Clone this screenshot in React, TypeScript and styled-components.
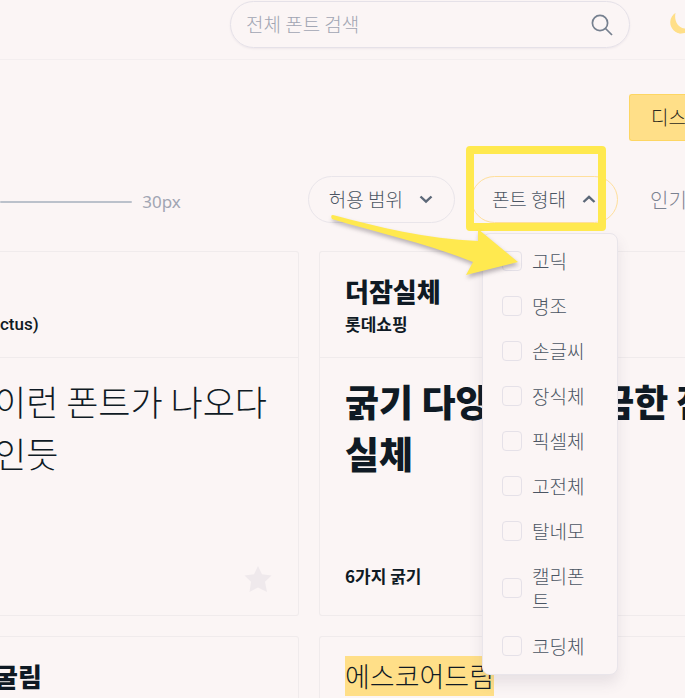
import React from "react";
import styled, { createGlobalStyle, css } from "styled-components";

const GlobalStyle = createGlobalStyle`
  *, *::before, *::after { box-sizing: border-box; }
  body {
    margin: 0;
    background: #fbf5f5;
    color: #0f1a24;
    font-family: "Noto Sans CJK KR", sans-serif;
    font-size: 19px;
    font-weight: 300;
    line-height: 25px;
  }
  button, input { font: inherit; color: inherit; margin: 0; }
  h2, p { margin: 0; font-weight: inherit; }
`;

const Page = styled.div`
  height: 100vh;
  overflow: hidden;
`;

const Header = styled.header`
  display: flex;
  align-items: flex-start;
  justify-content: flex-end;
  gap: 39px;
  height: 60px;
  padding-top: 1px;
  border-bottom: 1px solid #f3eeef;
`;

const SearchForm = styled.form`
  display: flex;
  align-items: center;
  flex: 0 1 400px;
  height: 47px;
  padding: 0 16px 0 15px;
  border: 1px solid #e5e1e8;
  border-radius: 24px;
  box-shadow: 0 1px 2px rgba(90, 80, 110, 0.08);
`;

const SearchInput = styled.input`
  flex: 1;
  min-width: 0;
  padding: 0 0 2px;
  border: 0;
  outline: 0;
  background: transparent;
  &::placeholder { color: #a1a5b3; opacity: 1; }
`;

const IconButton = styled.button`
  display: flex;
  flex: none;
  padding: 0;
  border: 0;
  background: transparent;
  cursor: pointer;
`;

const ThemeButton = styled(IconButton)`
  margin: 10px -8px 0 0;
`;

const ActionBar = styled.div`
  display: flex;
  justify-content: flex-end;
  padding-top: 34px;
`;

const DisplayButton = styled.button`
  width: 56px;
  height: 47px;
  padding: 0 0 2px 21px;
  border: 1px solid #fdd663;
  border-right: 0;
  border-radius: 3px 0 0 3px;
  background: #ffdf88;
  color: #2b2a20;
  text-align: left;
  white-space: nowrap;
`;

const Toolbar = styled.div`
  display: flex;
  align-items: center;
  margin-top: 35px;
  height: 47px;
`;

const SizeControl = styled.label`
  display: flex;
  align-items: center;
  flex: 1;
  min-width: 0;
  gap: 10px;
  padding: 4px 127px 0 0;
  color: #a1a5b3;
  font-family: "Noto Sans", "Noto Sans CJK KR", sans-serif;
  font-size: 17px;
  font-weight: 400;
  overflow: hidden;
`;

const SizeSlider = styled.input`
  appearance: none;
  flex: 1;
  min-width: 0;
  height: 2px;
  border-radius: 1px;
  background: #bbc1cb;
  outline: 0;
  &::-webkit-slider-thumb { appearance: none; width: 0; height: 0; }
`;

const Filters = styled.div`
  display: flex;
  align-items: center;
  flex: none;
  gap: 16px;
`;

const Dropdown = styled.div`
  position: relative;
`;

const FilterButton = styled.button<{ $open?: boolean }>`
  display: flex;
  align-items: center;
  gap: 15px;
  height: 47px;
  padding: 0 20px 2px;
  border: 1px solid ${(p) => (p.$open ? "#ffdf9c" : "#e9e5ea")};
  border-radius: 24px;
  background: transparent;
  color: #4b5563;
  white-space: nowrap;
`;

const Menu = styled.div`
  position: absolute;
  z-index: 2;
  top: 57px;
  right: 0;
  width: 136px;
  padding: 5px 0;
  border: 1px solid #e9e5ea;
  border-radius: 8px;
  background: #fbf5f5;
  box-shadow: 0 8px 14px rgba(90, 80, 110, 0.12);
`;

const Option = styled.label`
  display: flex;
  align-items: center;
  gap: 10px;
  padding: 9px 20px 11px 19px;
  color: #4b5563;
  word-break: break-all;
`;

const CheckBox = styled.input`
  appearance: none;
  flex: none;
  width: 20px;
  height: 20px;
  border: 1px solid #e5e1e8;
  border-radius: 4px;
`;

const Marker = styled.div`
  position: absolute;
  z-index: 3;
  top: -30px;
  left: -5px;
  width: 140px;
  height: 85px;
  border: 8px solid #ffe94f;
  border-radius: 4px;
  pointer-events: none;
`;

const Arrow = styled.svg`
  position: absolute;
  z-index: 4;
  top: 36px;
  left: -143px;
  pointer-events: none;
`;

const SortButton = styled.button`
  width: 51px;
  padding: 0 0 0 16px;
  border: 0;
  background: transparent;
  color: #7b8290;
  font-size: 20px;
  text-align: left;
  white-space: nowrap;
`;

const CardGrid = styled.main`
  display: grid;
  grid-template-columns: 299fr 366fr;
  gap: 20px;
  margin-top: 28px;
`;

const Card = styled.article<{ $side: "left" | "right" }>`
  display: flex;
  flex-direction: column;
  min-width: 0;
  min-height: 365px;
  border: 1px solid #f0ebec;
  ${(p) =>
    p.$side === "left"
      ? css`
          margin-left: -6px;
          border-left: 0;
          border-radius: 0 3px 3px 0;
          --inset: 0;
        `
      : css`
          border-right: 0;
          border-radius: 3px 0 0 3px;
          --inset: 25px;
        `}
`;

const CardHead = styled.header`
  height: 106px;
  padding: 19px 26px 0 var(--inset);
  border-bottom: 1px solid #f0ebec;
  overflow: hidden;
`;

const CardTitle = styled.h2<{ $light?: boolean }>`
  min-height: 40px;
  font-size: ${(p) => (p.$light ? 27 : 26)}px;
  font-weight: ${(p) => (p.$light ? 300 : 900)};
  line-height: 40px;
  white-space: nowrap;
`;

const Highlight = styled.mark`
  display: inline-block;
  background: #ffdf88;
  color: inherit;
`;

const Maker = styled.p<{ $latin?: boolean }>`
  padding-left: ${(p) => (p.$latin ? 6 : 0)}px;
  font-family: ${(p) => (p.$latin ? "Roboto" : `"Noto Sans CJK KR"`)}, sans-serif;
  font-size: 17px;
  font-weight: ${(p) => (p.$latin ? 500 : 700)};
  line-height: 26px;
`;

const CardBody = styled.div`
  display: flex;
  flex: 1;
  flex-direction: column;
  justify-content: space-between;
  padding: 17px 26px 22px var(--inset);
`;

const Sample = styled.p<{ $bold?: boolean }>`
  font-size: ${(p) => (p.$bold ? 37 : 35)}px;
  font-weight: ${(p) => (p.$bold ? 900 : 300)};
  line-height: 52px;
  white-space: nowrap;
`;

const CardFoot = styled.footer`
  display: flex;
  align-items: flex-start;
  height: 28px;
  font-size: 17px;
  font-weight: 700;
  line-height: 22px;
`;

const StarButton = styled(IconButton)`
  margin-left: auto;
`;

const SearchIcon = () => (
  <svg width="22" height="22" viewBox="0 0 22 22" fill="none" stroke="#76808f" strokeWidth="1.7">
    <circle cx="9" cy="9" r="7.6" />
    <path d="M14.5 14.5 21 21" />
  </svg>
);

const MoonIcon = () => (
  <svg width="24" height="24" viewBox="0 0 24 24" fill="#ffdf88">
    <path d="M6.5 2A11 11 0 1 0 22 16.5A10.5 10.5 0 0 1 6.5 2Z" />
    <path d="M6.5 2C5 9 8 16 15.5 17.5C18 18 20 17.3 22 16.5C19 21 15 22.6 11 22.4C3 21 -2 9 6.5 2Z" />
  </svg>
);

const Chevron = ({ up }: { up?: boolean }) => (
  <svg width="16" height="10" viewBox="0 0 16 10" fill="none" stroke="#5c6878" strokeWidth="2.4">
    <path d={up ? "M2.5 8 8 2.8 13.5 8" : "M2.5 2.5 8 7.7 13.5 2.5"} />
  </svg>
);

const StarIcon = () => (
  <svg width="28" height="28" viewBox="0 0 28 28" fill="#efe9ec">
    <path d="M14 1 18 9.3 27.5 10.5 21 16.8 23 27 14 22.5 5.5 27 7 16.8 .5 10.5 10 9.3Z" />
  </svg>
);

const styles = ["고딕", "명조", "손글씨", "장식체", "픽셀체", "고전체", "탈네모", "캘리폰트", "코딩체"];

export default function App() {
  return (
    <Page>
      <GlobalStyle />
      <Header>
        <SearchForm role="search">
          <SearchInput aria-label="전체 폰트 검색" placeholder="전체 폰트 검색" />
          <IconButton type="button" aria-label="검색">
            <SearchIcon />
          </IconButton>
        </SearchForm>
        <ThemeButton type="button" aria-label="테마">
          <MoonIcon />
        </ThemeButton>
      </Header>

      <ActionBar>
        <DisplayButton type="button">디스</DisplayButton>
      </ActionBar>

      <Toolbar>
        <SizeControl>
          <SizeSlider type="range" min={10} max={100} defaultValue={30} />
          30px
        </SizeControl>
        <Filters>
          <FilterButton type="button">
            허용 범위
            <Chevron />
          </FilterButton>
          <Dropdown>
            <FilterButton type="button" $open aria-expanded="true">
              폰트 형태
              <Chevron up />
            </FilterButton>
            <Menu>
              {styles.map((name) => (
                <Option key={name}>
                  <CheckBox type="checkbox" />
                  {name}
                </Option>
              ))}
            </Menu>
            <Marker />
            <Arrow width="200" height="76" viewBox="0 0 200 76" aria-hidden="true">
              <path
                d="M5 3C50 15 98 27 150 29V17L190 50 138 63 145 50C98 31 50 21 4 7Q2 3 5 3Z"
                fill="#ffe94f"
                style={{ filter: "drop-shadow(1px 3px 2px rgba(60,50,60,.35))" }}
              />
            </Arrow>
          </Dropdown>
          <SortButton type="button">인기</SortButton>
        </Filters>
      </Toolbar>

      <CardGrid>
        <Card $side="left">
          <CardHead>
            <CardTitle />
            <Maker $latin>ctus)</Maker>
          </CardHead>
          <CardBody>
            <Sample>
              이런 폰트가 나오다
              <br />
              인듯
            </Sample>
            <CardFoot>
              <StarButton type="button" aria-label="즐겨찾기">
                <StarIcon />
              </StarButton>
            </CardFoot>
          </CardBody>
        </Card>
        <Card $side="right">
          <CardHead>
            <CardTitle>더잠실체</CardTitle>
            <Maker>롯데쇼핑</Maker>
          </CardHead>
          <CardBody>
            <Sample $bold>
              굵기 다양하고 궁금한 잠
              <br />
              실체
            </Sample>
            <CardFoot>6가지 굵기</CardFoot>
          </CardBody>
        </Card>
        <Card $side="left">
          <CardHead>
            <CardTitle>굴림</CardTitle>
          </CardHead>
        </Card>
        <Card $side="right">
          <CardHead>
            <CardTitle $light>
              <Highlight>에스코어드림</Highlight>
            </CardTitle>
          </CardHead>
        </Card>
      </CardGrid>
    </Page>
  );
}
